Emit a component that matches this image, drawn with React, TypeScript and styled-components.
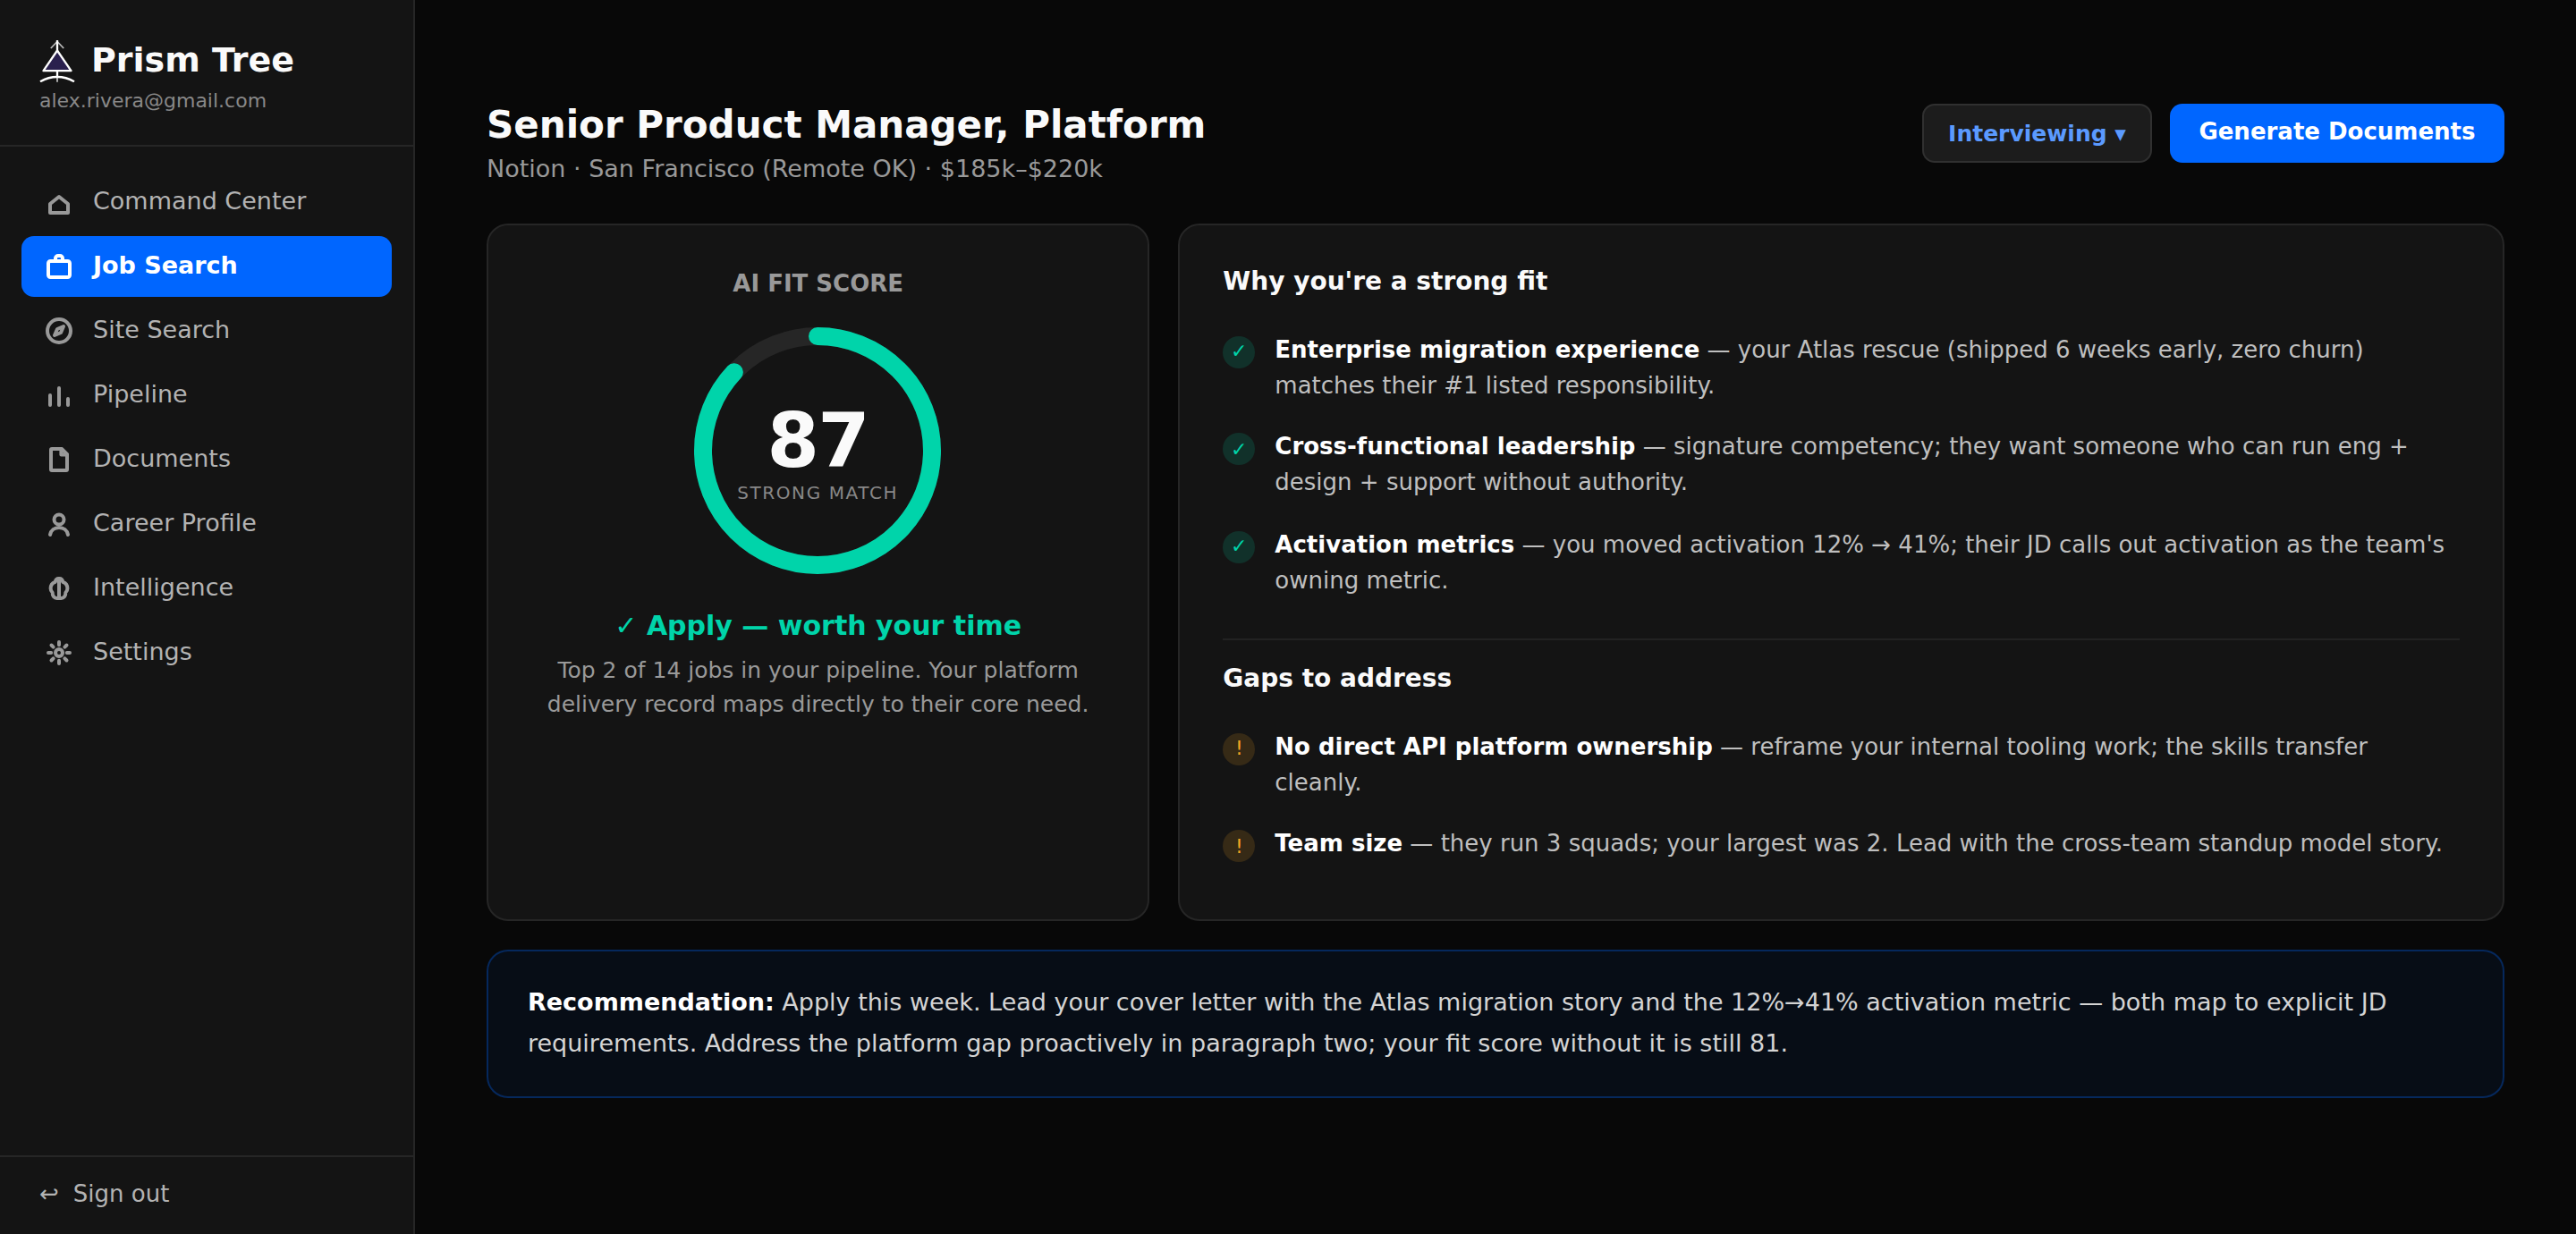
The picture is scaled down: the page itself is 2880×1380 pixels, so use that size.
import React from "react";
import styled, { createGlobalStyle, css } from "styled-components";

const Global = createGlobalStyle`
  * { box-sizing: border-box; }
  html, body { margin: 0; padding: 0; background: #080808; }
  body {
    font-family: "DejaVu Sans", sans-serif;
    color: #fafafa;
  }
  h1, h2, h3, p, ul { margin: 0; padding: 0; }
  ul { list-style: none; }
`;

const Shell = styled.div`
  display: flex;
  width: 2880px;
  height: 1380px;
  overflow: hidden;
`;

const Sidebar = styled.aside`
  display: flex;
  flex-direction: column;
  flex: none;
  width: 464px;
  background: #141414;
  border-right: 2px solid #262626;
`;

const Brand = styled.header`
  height: 164px;
  padding: 44px 44px 0;
  border-bottom: 2px solid #262626;
`;

const BrandRow = styled.div`
  display: flex;
  align-items: center;
  gap: 18px;
  height: 48px;
`;

const BrandName = styled.span`
  padding-bottom: 2px;
  font-size: 38px;
  line-height: 44px;
  font-weight: 700;
`;

const Email = styled.div`
  margin-top: 8px;
  font-size: 22px;
  line-height: 25px;
  color: #888888;
`;

const Nav = styled.nav`
  display: flex;
  flex-direction: column;
  flex: 1;
  gap: 4px;
  padding: 28px 24px;
`;

const NavItem = styled.a<{ $active?: boolean }>`
  display: flex;
  align-items: center;
  gap: 22px;
  height: 68px;
  padding: 0 26px;
  border-radius: 14px;
  font-size: 27px;
  color: #b3b3b3;
  svg { color: #999999; }
  ${(p) =>
    p.$active &&
    css`
      background: #0066ff;
      color: #ffffff;
      font-weight: 600;
      svg { color: #ffffff; }
    `}
`;

const NavLabel = styled.span`
  line-height: 31px;
  padding-bottom: 3px;
`;

const SignOut = styled.div`
  display: flex;
  align-items: center;
  gap: 16px;
  height: 88px;
  padding: 0 44px 4px;
  border-top: 2px solid #262626;
  font-size: 26px;
  line-height: 30px;
  color: #b3b3b3;
`;

const Main = styled.main`
  flex: 1;
  padding: 116px 80px 0;
`;

const TitleBar = styled.div`
  display: flex;
  justify-content: space-between;
  align-items: flex-start;
  height: 134px;
`;

const Title = styled.h1`
  font-size: 42px;
  line-height: 47px;
  font-weight: 700;
`;

const Subtitle = styled.p`
  margin-top: 10px;
  font-size: 27px;
  line-height: 31px;
  color: #999999;
`;

const Actions = styled.div`
  display: flex;
  gap: 20px;
`;

const Button = styled.button<{ $primary?: boolean }>`
  height: 66px;
  padding: 1px 27px 0;
  border: 2px solid #303030;
  border-radius: 14px;
  background: #1c1c1c;
  color: #5b9aff;
  font: 600 25px/29px "DejaVu Sans", sans-serif;
  ${(p) =>
    p.$primary &&
    css`
      padding: 0 32.5px 4px;
      border: 0;
      background: #0066ff;
      color: #ffffff;
      font-size: 26px;
      line-height: 30px;
    `}
`;

const Columns = styled.div`
  display: grid;
  grid-template-columns: 1fr 2fr;
  gap: 32px;
  height: 780px;
`;

const Card = styled.section`
  background: #141414;
  border: 2px solid #262626;
  border-radius: 24px;
`;

const ScoreCard = styled(Card)`
  display: flex;
  flex-direction: column;
  align-items: center;
  padding-top: 50px;
  text-align: center;
`;

const ScoreLabel = styled.h3`
  font-size: 26px;
  line-height: 30px;
  font-weight: 600;
  color: #999999;
`;

const Gauge = styled.div`
  display: grid;
  place-items: center;
  width: 280px;
  height: 280px;
  margin: 32px 1px 0 0;
  > * { grid-area: 1 / 1; }
`;

const GaugeText = styled.div`
  display: flex;
  flex-direction: column;
  align-items: center;
  padding-top: 6px;
`;

const Score = styled.span`
  font-size: 84px;
  line-height: 84px;
  font-weight: 700;
  letter-spacing: -0.02em;
`;

const ScoreCaption = styled.span`
  margin-top: 4px;
  font-size: 20px;
  line-height: 24px;
  letter-spacing: 0.08em;
  color: #888888;
`;

const Verdict = styled.p`
  margin-top: 38px;
  font-size: 30px;
  line-height: 35px;
  font-weight: 600;
  color: #00d4aa;
`;

const VerdictNote = styled.p`
  width: 640px;
  margin-top: 14px;
  font-size: 25px;
  line-height: 38px;
  color: #999999;
`;

const ReasonCard = styled(Card)`
  padding: 46px 48px 0;
`;

const Heading = styled.h2`
  font-size: 28px;
  line-height: 33px;
  font-weight: 600;
`;

const Marker = styled.span<{ $tone: "good" | "warn" }>`
  display: grid;
  place-items: center;
  flex: none;
  width: 36px;
  height: 36px;
  margin-top: 5px;
  padding-bottom: 3px;
  border-radius: 50%;
  font-size: 22px;
  line-height: 25px;
  color: ${(p) => (p.$tone === "good" ? "#00d4aa" : "#f5a623")};
  background: ${(p) => (p.$tone === "good" ? "rgba(0,212,170,.15)" : "rgba(245,166,35,.15)")};
`;

const Points = styled.ul`
  display: flex;
  flex-direction: column;
  gap: 28px;
  margin-top: 40px;
`;

const Point = styled.li`
  display: flex;
  gap: 22px;
  font-size: 26px;
  line-height: 40px;
  color: #bfbfbf;
  strong { color: #ffffff; font-weight: 600; }
  &:nth-child(2) ${Marker} { padding: 1px 0 0; }
  &:nth-child(3) { margin-top: 2px; }
`;

const Divider = styled.div`
  height: 2px;
  margin: 45px 0 26px;
  background: #222222;
`;

const Recommendation = styled.section`
  height: 166px;
  margin-top: 32px;
  padding: 34px 44px;
  border: 2px solid rgba(0, 102, 255, 0.3);
  border-radius: 24px;
  background: rgba(0, 102, 255, 0.06);
  font-size: 27px;
  line-height: 45.9px;
  color: #d4d4d4;
  strong { color: #ffffff; font-weight: 600; }
`;

const icons: Record<string, React.ReactNode> = {
  home: <path d="M3 9l5-4 5 4v5H3z" />,
  briefcase: (
    <>
      <rect x="2" y="5" width="12" height="9" rx="1.2" />
      <path d="M6 5V3.5A1.5 1.5 0 0 1 7.5 2h1A1.5 1.5 0 0 1 10 3.5V5" />
    </>
  ),
  compass: (
    <>
      <circle cx="8" cy="8" r="6.5" />
      <path d="M10.5 5.5L9 9l-3.500 1.500L7 7z" />
    </>
  ),
  bars: <path d="M3 13.500V8M8 13.500V4M13 13.500V10" />,
  file: (
    <>
      <path d="M9.500 2H4a.5.5 0 0 0-.5.5v11a.5.5 0 0 0 .5.5h8a.5.5 0 0 0 .5-.5V5z" />
      <path d="M9.200 2v3.200h3.300" />
    </>
  ),
  user: (
    <>
      <circle cx="8" cy="5.5" r="2.75" />
      <path d="M3 14c.5-2.500 2.500-4 5-4s4.500 1.500 5 4" />
    </>
  ),
  brain: (
    <>
      <path d="M8 2.500c-1.200 0-2 .8-2.100 1.900C4.300 4.900 3.300 6.400 3.300 8c0 .9.400 1.700 1 2.300 0 2 1 3.200 2.500 3.200h2.400c1.500 0 2.500-1.200 2.500-3.200.6-.6 1-1.400 1-2.300 0-1.600-1-3.100-2.600-3.600C10 3.300 9.200 2.500 8 2.500z" />
      <path d="M8 2.500v11" />
    </>
  ),
  gear: (
    <>
      <circle cx="8" cy="8" r="2" />
      <path d="M8 2v1.600M8 12.400V14M2 8h1.600M12.400 8H14M3.750 3.750l1.050 1.050M11.200 11.200l1.050 1.050M3.750 12.250l1.050-1.050M11.200 4.800l1.050-1.050" />
    </>
  ),
};

const NavIcon = ({ name }: { name: string }) => (
  <svg
    width="32"
    height="32"
    viewBox="0 0 16 16"
    fill="none"
    stroke="currentColor"
    strokeWidth="2"
    strokeLinecap="round"
    strokeLinejoin="round"
  >
    {icons[name]}
  </svg>
);

const Logo = () => (
  <svg width="40" height="48" viewBox="0 0 40 48" fill="none" stroke="#ffffff" strokeWidth="2.3">
    <path d="M20 12.500L4.500 35.200H35.500Z" fill="#2a204e" strokeLinejoin="round" />
    <path d="M20 1v11.500M20 34v8" />
    <path d="M20 42v5.700M12.800 10L20 2.500l7.200 7.500" strokeWidth="1.800" opacity="0.7" />
    <path d="M1 47.300Q10 42 20 42T39 47.300" />
  </svg>
);

const nav = [
  ["home", "Command Center"],
  ["briefcase", "Job Search"],
  ["compass", "Site Search"],
  ["bars", "Pipeline"],
  ["file", "Documents"],
  ["user", "Career Profile"],
  ["brain", "Intelligence"],
  ["gear", "Settings"],
];

const strengths = [
  [
    "Enterprise migration experience",
    "your Atlas rescue (shipped 6 weeks early, zero churn) matches their #1 listed responsibility.",
  ],
  [
    "Cross-functional leadership",
    "signature competency; they want someone who can run eng + design + support without authority.",
  ],
  [
    "Activation metrics",
    "you moved activation 12% → 41%; their JD calls out activation as the team's owning metric.",
  ],
];

const gaps = [
  ["No direct API platform ownership", "reframe your internal tooling work; the skills transfer cleanly."],
  ["Team size", "they run 3 squads; your largest was 2. Lead with the cross-team standup model story."],
];

const RADIUS = 128;
const LENGTH = 2 * Math.PI * RADIUS;

const PointList = ({ items, tone }: { items: string[][]; tone: "good" | "warn" }) => (
  <Points>
    {items.map(([title, text]) => (
      <Point key={title}>
        <Marker $tone={tone}>{tone === "good" ? "✓" : "!"}</Marker>
        <div>
          <strong>{title}</strong> — {text}
        </div>
      </Point>
    ))}
  </Points>
);

export default function App() {
  return (
    <>
      <Global />
      <Shell>
        <Sidebar>
          <Brand>
            <BrandRow>
              <Logo />
              <BrandName>Prism Tree</BrandName>
            </BrandRow>
            <Email>alex.rivera@gmail.com</Email>
          </Brand>
          <Nav>
            {nav.map(([icon, label]) => (
              <NavItem key={label} $active={label === "Job Search"}>
                <NavIcon name={icon} />
                <NavLabel>{label}</NavLabel>
              </NavItem>
            ))}
          </Nav>
          <SignOut>
            <span>↩</span>
            <span>Sign out</span>
          </SignOut>
        </Sidebar>
        <Main>
          <TitleBar>
            <div>
              <Title>Senior Product Manager, Platform</Title>
              <Subtitle>Notion · San Francisco (Remote OK) · $185k–$220k</Subtitle>
            </div>
            <Actions>
              <Button>Interviewing ▾</Button>
              <Button $primary>Generate Documents</Button>
            </Actions>
          </TitleBar>
          <Columns>
            <ScoreCard>
              <ScoreLabel>AI FIT SCORE</ScoreLabel>
              <Gauge>
                <svg width="280" height="280" viewBox="0 0 280 280" fill="none" strokeWidth="20">
                  <circle cx="140" cy="140" r={RADIUS} stroke="#262626" />
                  <circle
                    cx="140"
                    cy="140"
                    r={RADIUS}
                    stroke="#00d4aa"
                    strokeLinecap="round"
                    strokeDasharray={`${LENGTH * 0.87} ${LENGTH}`}
                    transform="rotate(-90 140 140)"
                  />
                </svg>
                <GaugeText>
                  <Score>87</Score>
                  <ScoreCaption>STRONG MATCH</ScoreCaption>
                </GaugeText>
              </Gauge>
              <Verdict>✓ Apply — worth your time</Verdict>
              <VerdictNote>
                Top 2 of 14 jobs in your pipeline. Your platform delivery record maps directly to their core need.
              </VerdictNote>
            </ScoreCard>
            <ReasonCard>
              <Heading>Why you're a strong fit</Heading>
              <PointList items={strengths} tone="good" />
              <Divider />
              <Heading>Gaps to address</Heading>
              <PointList items={gaps} tone="warn" />
            </ReasonCard>
          </Columns>
          <Recommendation>
            <strong>Recommendation:</strong> Apply this week. Lead your cover letter with the Atlas migration story and
            the 12%→41% activation metric — both map to explicit JD requirements. Address the platform gap proactively
            in paragraph two; your fit score without it is still 81.
          </Recommendation>
        </Main>
      </Shell>
    </>
  );
}
